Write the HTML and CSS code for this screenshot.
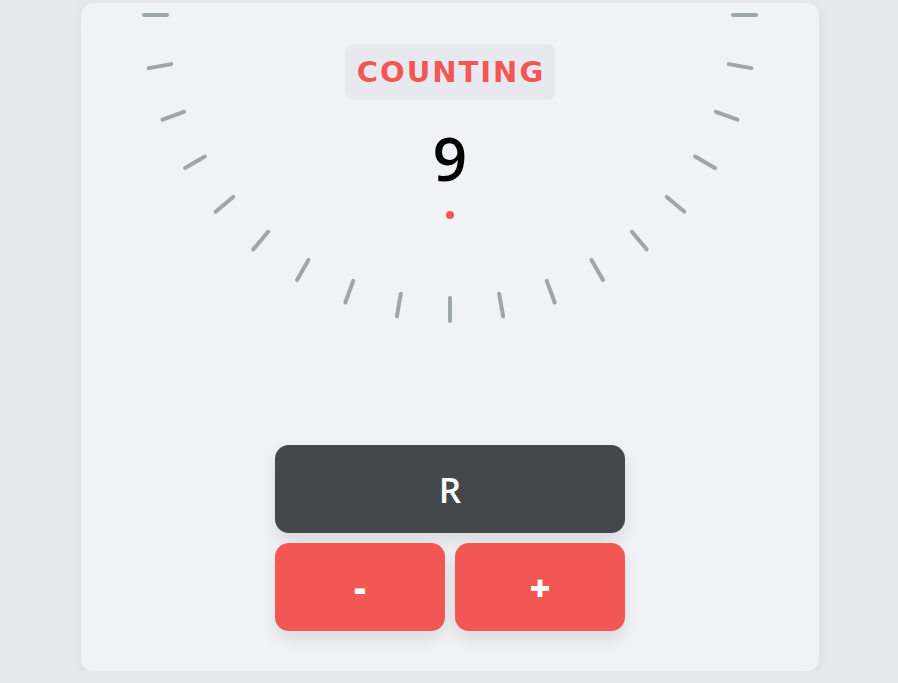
FILE: index.html
```html
<!DOCTYPE html>
<html>
<head>
<meta charset="utf-8">
<link rel="stylesheet" href="styles.css">
</head>
<body>
<div class="card">
  <svg class="dial" width="738" height="330" viewBox="0 0 738 330">
    <g transform="translate(369,12)" stroke="#9ea5ab" stroke-width="4" stroke-linecap="round">
      <line x1="-283" y1="0" x2="-306" y2="0" transform="rotate(0)"/>
      <line x1="-283" y1="0" x2="-306" y2="0" transform="rotate(-10)"/>
      <line x1="-283" y1="0" x2="-306" y2="0" transform="rotate(-20)"/>
      <line x1="-283" y1="0" x2="-306" y2="0" transform="rotate(-30)"/>
      <line x1="-283" y1="0" x2="-306" y2="0" transform="rotate(-40)"/>
      <line x1="-283" y1="0" x2="-306" y2="0" transform="rotate(-50)"/>
      <line x1="-283" y1="0" x2="-306" y2="0" transform="rotate(-60)"/>
      <line x1="-283" y1="0" x2="-306" y2="0" transform="rotate(-70)"/>
      <line x1="-283" y1="0" x2="-306" y2="0" transform="rotate(-80)"/>
      <line x1="-283" y1="0" x2="-306" y2="0" transform="rotate(-90)"/>
      <line x1="-283" y1="0" x2="-306" y2="0" transform="rotate(-100)"/>
      <line x1="-283" y1="0" x2="-306" y2="0" transform="rotate(-110)"/>
      <line x1="-283" y1="0" x2="-306" y2="0" transform="rotate(-120)"/>
      <line x1="-283" y1="0" x2="-306" y2="0" transform="rotate(-130)"/>
      <line x1="-283" y1="0" x2="-306" y2="0" transform="rotate(-140)"/>
      <line x1="-283" y1="0" x2="-306" y2="0" transform="rotate(-150)"/>
      <line x1="-283" y1="0" x2="-306" y2="0" transform="rotate(-160)"/>
      <line x1="-283" y1="0" x2="-306" y2="0" transform="rotate(-170)"/>
      <line x1="-283" y1="0" x2="-306" y2="0" transform="rotate(-180)"/>
    </g>
  </svg>
  <div class="content">
    <div class="badge">COUNTING</div>
    <div class="count">9</div>
    <div class="dot"></div>
  </div>
  <div class="controls">
    <button class="btn reset">R</button>
    <div class="row">
      <button class="btn red">-</button>
      <button class="btn red">+</button>
    </div>
  </div>
</div>
</body>
</html>
```

FILE: styles.css
```css
html, body {
  margin: 0;
  padding: 0;
  background: #e8e9ee;
}
body {
  padding-top: 3px;
  font-family: "DejaVu Sans", "Open Sans", sans-serif;
}
.card {
  position: relative;
  width: 738px;
  height: 668px;
  margin: 0 auto 0 81px;
  background: #f1f2f6;
  border-radius: 12px;
  box-shadow: 0 4px 14px rgba(0, 0, 0, 0.06);
  display: flex;
  flex-direction: column;
  align-items: center;
}
.dial {
  position: absolute;
  left: 0;
  top: 0;
}
.content {
  position: relative;
  display: flex;
  flex-direction: column;
  align-items: center;
  padding-top: 41px;
  height: 442px;
  box-sizing: border-box;
}
.badge {
  width: 210px;
  height: 56px;
  box-sizing: border-box;
  border-radius: 8px;
  background: #e8e9ee;
  color: #f25754;
  font-weight: bold;
  font-size: 29px;
  letter-spacing: 2px;
  display: flex;
  align-items: center;
  justify-content: center;
  padding-left: 2px;
}
.count {
  margin-top: 19px;
  font-family: "Open Sans", sans-serif;
  font-weight: 600;
  font-size: 60px;
  line-height: 78px;
  color: #000;
}
.dot {
  margin-top: 14px;
  width: 8px;
  height: 8px;
  border-radius: 50%;
  background: #f25754;
}
.controls {
  display: flex;
  flex-direction: column;
  gap: 10px;
  width: 350px;
}
.row {
  display: flex;
  gap: 10px;
}
.btn {
  border: none;
  height: 88px;
  border-radius: 14px;
  color: #fff;
  font-family: "Open Sans", sans-serif;
  font-weight: 800;
  font-size: 36px;
  box-shadow: 0 8px 16px rgba(0, 0, 0, 0.1);
  padding: 0;
}
.reset {
  width: 350px;
  background: #45484b;
  font-weight: 600;
  font-size: 35px;
}
.red {
  flex: 1;
  background: #f25754;
}
```
